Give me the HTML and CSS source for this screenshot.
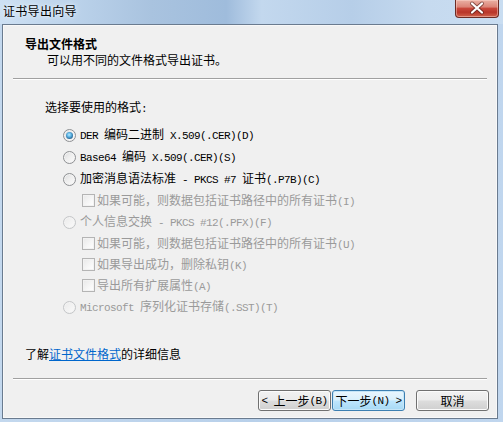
FILE: index.html
```html
<!DOCTYPE html>
<html lang="zh-CN">
<head>
<meta charset="utf-8">
<title>证书导出向导</title>
<link rel="stylesheet" href="styles.css">
</head>
<body>
<div class="window">
  <div class="titlebar">
    <span class="title">证书导出向导</span>
    <div class="close">
      <svg width="44" height="18" viewBox="0 0 44 18">
        <path d="M17 4.5 L27 13.5 M27 4.5 L17 13.5" stroke="#4a1a16" stroke-width="4" stroke-linecap="round" fill="none" opacity="0.6"/>
        <path d="M17 4.5 L27 13.5 M27 4.5 L17 13.5" stroke="#ffffff" stroke-width="2.2" stroke-linecap="round" fill="none"/>
      </svg>
    </div>
  </div>
  <div class="client">
    <div class="header">
      <div class="h-title">导出文件格式</div>
      <div class="h-sub">可以用不同的文件格式导出证书。</div>
    </div>
    <div class="sep"></div>
    <div class="content">
      <div class="label">选择要使用的格式<span class="m">:</span></div>
      <div class="row radio-row"><span class="radio on"></span><span class="txt"><span class="m">DER </span>编码二进制<span class="m"> X.509(.CER)(D)</span></span></div>
      <div class="row radio-row"><span class="radio"></span><span class="txt"><span class="m">Base64 </span>编码<span class="m"> X.509(.CER)(S)</span></span></div>
      <div class="row radio-row"><span class="radio"></span><span class="txt">加密消息语法标准<span class="m"> - PKCS #7 </span>证书<span class="m">(.P7B)(C)</span></span></div>
      <div class="row check-row dis"><span class="check"></span><span class="txt">如果可能，则数据包括证书路径中的所有证书<span class="m">(I)</span></span></div>
      <div class="row radio-row dis"><span class="radio"></span><span class="txt">个人信息交换<span class="m"> - PKCS #12(.PFX)(F)</span></span></div>
      <div class="row check-row dis"><span class="check"></span><span class="txt">如果可能，则数据包括证书路径中的所有证书<span class="m">(U)</span></span></div>
      <div class="row check-row dis"><span class="check"></span><span class="txt">如果导出成功，删除私钥<span class="m">(K)</span></span></div>
      <div class="row check-row dis"><span class="check"></span><span class="txt">导出所有扩展属性<span class="m">(A)</span></span></div>
      <div class="row radio-row dis"><span class="radio"></span><span class="txt"><span class="m">Microsoft </span>序列化证书存储<span class="m">(.SST)(T)</span></span></div>
    </div>
    <div class="more">了解<a class="link" href="#">证书文件格式</a>的详细信息</div>
    <div class="sep"></div>
    <div class="buttons">
      <div class="btn"><span class="m">&lt; </span>上一步<span class="m">(B)</span></div>
      <div class="btn default">下一步<span class="m">(N) &gt;</span></div>
      <div class="btn cancel">取消</div>
    </div>
  </div>
</div>
</body>
</html>
```

FILE: styles.css
```css
* { box-sizing: border-box; }
html, body {
  margin: 0;
  padding: 0;
}
body {
  width: 503px;
  height: 422px;
  overflow: hidden;
  font-family: "Noto Sans CJK SC", sans-serif;
  font-size: 12px;
  color: #000;
}
.window {
  width: 503px;
  height: 422px;
  background: linear-gradient(to right, #c3d8ee 0%, #b8d0ea 50%, #c0d6ee 100%);
  display: flex;
  flex-direction: column;
}
.titlebar {
  height: 24px;
  display: flex;
  align-items: flex-start;
  background: linear-gradient(to right, #cde0f3 0%, #bcd3eb 14%, #a9c3df 30%, #9fbcdc 45%, #c3d8ee 52%, #b6cee8 70%, #c6daef 85%, #c9ddf1 100%);
}
.title {
  padding-left: 3px;
  line-height: 22px;
  font-size: 12px;
  color: #000;
  letter-spacing: 0.3px;
  text-shadow: 0 0 6px #e8f2fc, 0 0 3px #e8f2fc;
}
.close {
  margin-left: auto;
  margin-right: 4px;
  width: 44px;
  height: 18px;
  border: 1px solid #6c2b24;
  border-top: none;
  border-radius: 0 0 4px 4px;
  background: linear-gradient(#eab0a3 0%, #dc8578 40%, #c8473a 50%, #b9362a 72%, #d0614a 100%);
  box-shadow: inset 0 0 0 1px rgba(255, 220, 210, 0.45);
}
.close svg { display: block; margin: -1px 0 0 -1px; }
.client {
  margin: 0 5px 3px 2px;
  width: 496px;
  height: 395px;
  border: 1px solid #6a7b8f;
  background: #f0f0f0;
  box-shadow: inset 0 0 0 1px #f8f8f8;
  display: flex;
  flex-direction: column;
}
.header {
  padding: 11px 0 0 22px;
  line-height: 16px;
}
.h-title { font-weight: bold; }
.h-sub { padding-left: 22px; }
.sep {
  margin: 10px 10px 0 10px;
  height: 2px;
  border-top: 1px solid #a0a0a0;
  border-bottom: 1px solid #ffffff;
}
.content {
  padding-left: 42px;
  display: flex;
  flex-direction: column;
}
.label {
  margin-top: 19px;
  margin-bottom: 7px;
  line-height: 16px;
}
.m {
  font-family: "Liberation Mono", monospace;
  font-size: 11px;
  letter-spacing: -0.6px;
  white-space: pre;
}
.row {
  display: flex;
  align-items: center;
  line-height: 16px;
}
.radio-row { height: 22px; padding-left: 18px; }
.check-row { height: 21px; padding-left: 37px; }
.dis { color: #9a9a9a; }
.radio {
  position: relative;
  width: 13px;
  height: 13px;
  border-radius: 50%;
  border: 1px solid #8e9093;
  background: linear-gradient(135deg, #d9dadb 0%, #eeeeee 45%, #fcfcfc 100%);
  box-shadow: inset 0 0 0 1px #f3f3f3;
  margin-right: 4px;
  flex: none;
}
.dis .radio {
  border-color: #c4c6c8;
  background: linear-gradient(135deg, #eaeaea 0%, #f4f4f4 60%, #fbfbfb 100%);
}
.radio.on::after {
  content: "";
  position: absolute;
  left: 2px;
  top: 2px;
  width: 7px;
  height: 7px;
  border-radius: 50%;
  background: radial-gradient(circle at 45% 40%, #b8ecff 0%, #5fb6e6 35%, #24618f 75%, #1a4568 100%);
}
.check {
  width: 13px;
  height: 13px;
  border: 1px solid #b4b4b4;
  background: linear-gradient(135deg, #e8e8e8 0%, #f7f7f7 60%, #ffffff 100%);
  box-shadow: inset 0 0 0 1px #f2f2f2;
  margin-right: 2px;
  flex: none;
}
.more {
  margin-top: 28px;
  padding-left: 22px;
  line-height: 16px;
}
.more + .sep { margin-top: 16px; }
.link {
  color: #0066cc;
  text-decoration: underline;
}
.buttons {
  display: flex;
  justify-content: flex-end;
  align-items: flex-start;
  margin-top: 10px;
  padding-right: 8px;
}
.btn {
  width: 73px;
  height: 21px;
  border: 1px solid #707070;
  border-radius: 3px;
  background: linear-gradient(#f2f2f2 0%, #ebebeb 48%, #dddddd 52%, #cfcfcf 100%);
  box-shadow: inset 0 0 0 1px #fbfbfb;
  display: flex;
  align-items: center;
  justify-content: center;
  line-height: 16px;
}
.btn + .btn { margin-left: 1px; }
.btn.default {
  border-color: #3c7fb1;
  background: linear-gradient(#eaf6fd 0%, #d9f0fc 48%, #bee6fd 52%, #a7d9f5 100%);
  box-shadow: inset 0 0 0 1px #c6e6f8;
}
.btn.cancel { margin-left: 11px; }
```
